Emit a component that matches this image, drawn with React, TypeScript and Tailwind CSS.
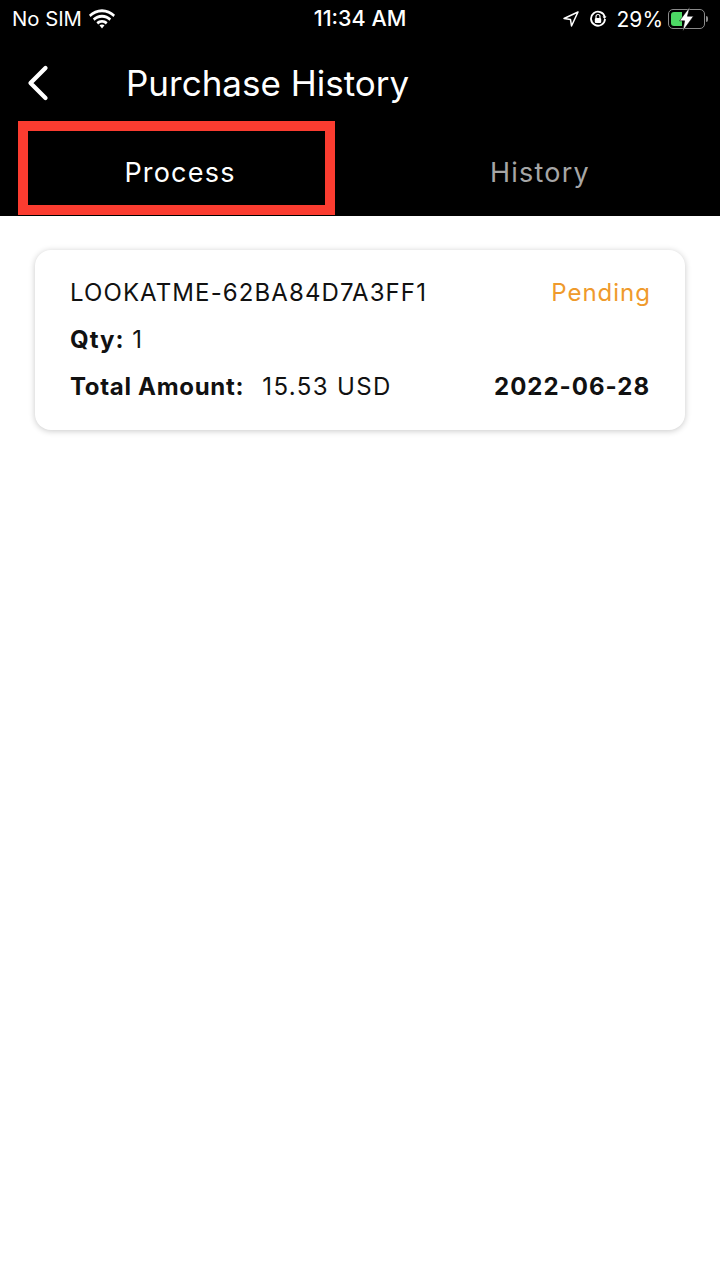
import { ChevronLeft } from 'lucide-react';

function StatusBar() {
  return (
    <div className="flex h-[38px] items-center justify-between pl-3 pr-[15px] leading-none text-white">
      <div className="flex w-[200px] items-center gap-[7px] text-[20.3px]">
        <span>No SIM</span>
        <svg width="26" height="20" viewBox="0 0 27 20" fill="white">
          <path d="M13.5 3C18 3 22.2 4.8 25.4 7.8L27 5.7C23.4 2.2 18.6 0 13.5 0S3.6 2.2 0 5.7L1.6 7.8C4.8 4.8 9 3 13.5 3Z" />
          <path d="M13.5 8.6c3 0 5.700 1.100 7.800 3.100l1.700-2.100C20.400 7.100 17.100 5.700 13.500 5.700S6.600 7.100 4 9.600l1.700 2.100c2.100-2 4.800-3.100 7.800-3.100Z" />
          <path d="M13.500 14c1.500 0 2.900.6 4 1.600l1.800-2.200c-1.600-1.400-3.600-2.300-5.800-2.300s-4.200.9-5.800 2.300l1.800 2.200c1.100-1 2.500-1.600 4-1.600Z" />
          <path d="M13.500 15.600c-1 0-1.900.4-2.600 1l2.600 3.200 2.600-3.200c-.7-.6-1.600-1-2.600-1Z" />
        </svg>
      </div>
      <span className="text-[21.5px] font-medium">11:34 AM</span>
      <div className="flex w-[197px] items-center justify-end gap-[10px] text-[21px]">
        <svg width="16" height="16" viewBox="0 0 16 16" fill="none" stroke="white" strokeWidth="1.5" strokeLinejoin="round">
          <path d="M15 1 1 7.500l6.500 1 1 6.500L15 1Z" />
        </svg>
        <svg width="18" height="18" viewBox="0 0 18 18" fill="none">
          <path d="M15.800 7A7 7 0 1 0 16 9" stroke="white" strokeWidth="1.800" />
          <path d="M13.500 6.500h4l-2 2.500-2-2.500Z" fill="white" />
          <rect x="5.800" y="8" width="6.400" height="5" rx="1" fill="white" />
          <path d="M7 8V6.500a2 2 0 0 1 4 0V8" stroke="white" strokeWidth="1.200" />
        </svg>
        <div className="flex items-center gap-[5px]">
          <span>29%</span>
          <div className="relative flex h-[20px] w-[37px] items-center rounded-[5px] border border-[#8a8a8a] p-[2px]">
            <div className="h-full w-[11px] rounded-l-[3px] bg-[#4cd964]" />
            <svg className="absolute left-[10px] top-[-3px]" width="15" height="24" viewBox="0 0 15 26" fill="white" stroke="black" strokeWidth="0.6">
              <path d="M11 0 0 15h5.500L3.500 26 15 10H8.500L11 0Z" />
            </svg>
            <div className="absolute right-[-4px] top-[6px] h-[6px] w-[2px] rounded-r bg-[#8a8a8a]" />
          </div>
        </div>
      </div>
    </div>
  );
}

export default function App() {
  return (
    <div className="relative min-h-[1280px] bg-white font-['Inter',sans-serif]">
      <div className="bg-black">
        <StatusBar />
        <div className="flex h-[88px] items-center pl-2 pt-[2px]">
          <ChevronLeft className="text-white" size={60} strokeWidth={1.7} />
          <h1 className="ml-[58px] text-[35px] font-normal leading-none text-white">Purchase History</h1>
        </div>
        <div className="grid h-[90px] grid-cols-2 pb-[1px] text-[27px] leading-none tracking-[1.2px]">
          <button className="pt-[3px] text-white">Process</button>
          <button className="pt-[3px] text-[#a6a6a6]">History</button>
        </div>
      </div>

      {/* Red annotation over the active tab */}
      <div className="absolute left-[18px] top-[121px] h-[94px] w-[317px] border-[10px] border-[#fb3c30]" />

      <div className="px-[35px] pt-[34px]">
        <div className="flex h-[180px] flex-col justify-between rounded-[16px] bg-white py-[30px] pl-[35px] pr-[34px] text-[24px] leading-[26px] text-[#111] shadow-[0_1px_6px_rgba(0,0,0,0.22)]">
          <div className="flex justify-between">
            <span className="tracking-[1.1px]">LOOKATME-62BA84D7A3FF1</span>
            <span className="tracking-[1px] text-[#ef9a2c]">Pending</span>
          </div>
          <div className="tracking-[1px]">
            <span className="font-bold">Qty:</span> 1
          </div>
          <div className="flex justify-between">
            <div className="flex gap-[18px]">
              <span className="font-bold tracking-[0.7px]">Total Amount:</span>
              <span className="tracking-[1.4px]">15.53 USD</span>
            </div>
            <span className="mr-[1px] font-bold tracking-[1px]">2022-06-28</span>
          </div>
        </div>
      </div>
    </div>
  );
}
